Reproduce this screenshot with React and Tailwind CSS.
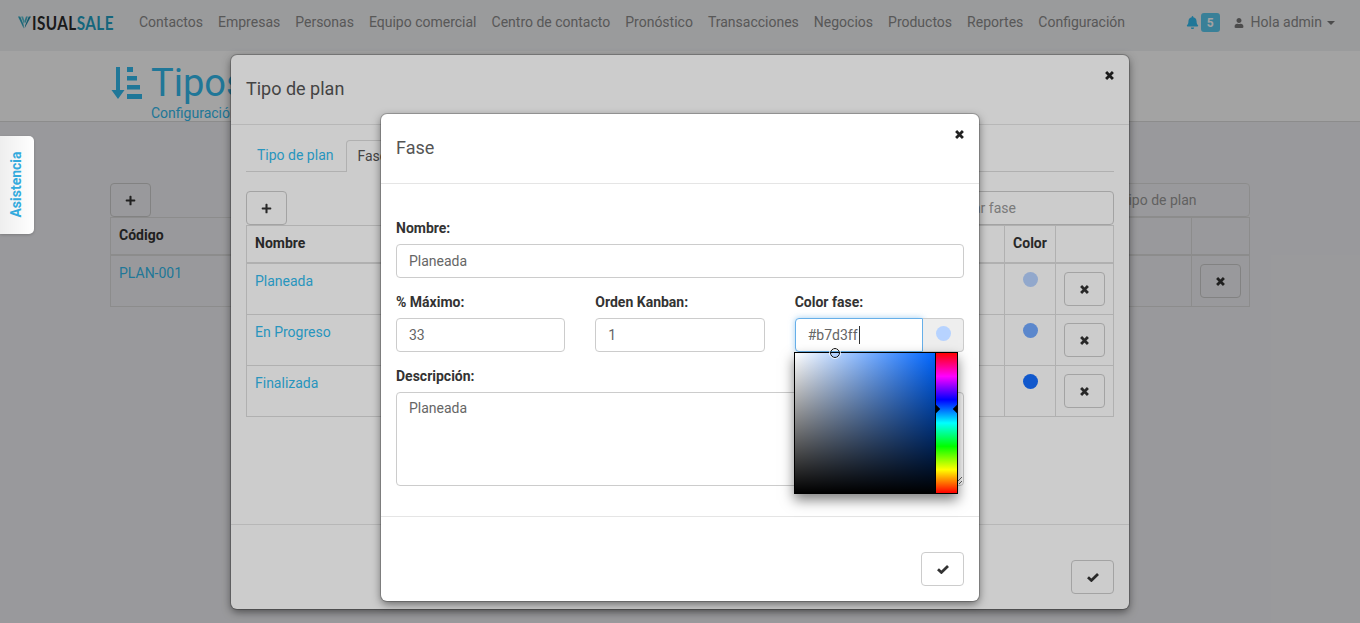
import React from "react";
import { FaPlus, FaBell, FaUser } from "react-icons/fa";

const link = "text-[#33bbee]";
const navItems = ["Contactos","Empresas","Personas","Equipo comercial","Centro de contacto","Pronóstico","Transacciones","Negocios","Productos","Reportes","Configuración"];

function XIcon({ className = "" }) {
  return (
    <svg width="9" height="9" viewBox="0 0 10 10" className={className} fill="none" stroke="currentColor" strokeWidth="3.1">
      <path d="M1.2 1.2 8.8 8.8M8.8 1.2 1.2 8.8" />
    </svg>
  );
}

function CheckIcon() {
  return (
    <svg width="12" height="9" viewBox="0 0 12 9" fill="none" stroke="currentColor" strokeWidth="2.8">
      <path d="M1 4.2 4.4 7.4 11 1" />
    </svg>
  );
}

function IconBtn({ children, className = "" }) {
  return (
    <button className={"flex h-[34px] w-[41px] items-center justify-center rounded-[4px] border border-[#ccc] text-[#333] " + className}>
      {children}
    </button>
  );
}

function Field({ label, children }) {
  return (
    <div>
      <label className="mb-[6px] block h-5 text-[14px] leading-5 font-bold text-[#333]">{label}</label>
      {children}
    </div>
  );
}

function TextBox({ children }) {
  return (
    <div className="flex h-[34px] items-center rounded-[4px] border border-[#ccc] bg-white px-3 text-[14px] text-[#666]">{children}</div>
  );
}

function Logo() {
  return (
    <div className="flex w-[98px] shrink-0 items-center text-[18px] leading-none font-bold tracking-[0.5px] font-['Lato',sans-serif]">
      <svg width="13" height="13" viewBox="0 0 15 14" className="mr-[1px] shrink-0">
        <path d="M0 0h2.6l4 10V14z" fill="#2fa6bf" />
        <path d="M3.6 0h2.2l2 6-1 3z" fill="#5cc2d4" />
        <path d="M15 0h-2.6l-4 10 -.9 4z" fill="#1e8aa8" />
        <path d="M11.4 0H9.2L7.6 5l1 3z" fill="#49b3c9" />
      </svg>
      <span className="origin-left scale-x-[0.85] whitespace-nowrap">
        <span className="text-[#2a2a2a]">ISUAL</span>
        <span className="text-[#22a0c4]">SALE</span>
      </span>
    </div>
  );
}

function ColorPicker() {
  return (
    <div className="absolute top-[238px] left-[413px] z-10 flex h-[142px] w-[164px] border border-black bg-black shadow-[0_6px_12px_rgba(0,0,0,0.5)]">
      <div className="relative h-full w-[140px] bg-[linear-gradient(to_bottom,transparent,#000),linear-gradient(to_right,#fff,#0066ff)]">
        <span className="absolute top-[-5px] left-[35px] h-[10px] w-[10px] rounded-full border-[1.5px] border-black outline outline-1 outline-white/80" />
      </div>
      <div className="relative ml-px h-full w-[21px] overflow-hidden bg-[linear-gradient(to_bottom,#f00,#f0f,#00f,#0ff,#0f0,#ff0,#f00)]">
        <span className="absolute top-[53px] left-[-3px] h-[6px] w-[6px] rotate-45 bg-black" />
        <span className="absolute top-[53px] right-[-3px] h-[6px] w-[6px] rotate-45 bg-black" />
      </div>
    </div>
  );
}

function PhaseRow({ name, dot }) {
  return (
    <div className="flex h-[51px] border-b border-[#ddd]">
      <div className="flex-1 border-r border-[#ddd] px-2 pt-[7px] text-[14px]">
        <span className={link}>{name}</span>
      </div>
      <div className="flex w-[51px] justify-center border-r border-[#ddd] pt-[7px]">
        <span className={"mt-px h-[15px] w-[15px] rounded-full " + dot} />
      </div>
      <div className="flex w-[57px] justify-center pt-2">
        <IconBtn><XIcon /></IconBtn>
      </div>
    </div>
  );
}

export default function App() {
  return (
    <div className="relative h-[623px] w-[1360px] overflow-hidden bg-[#f1f1f4] font-['Roboto',sans-serif] text-[14px] text-[#333]">
      {/* Page */}
      <nav className="flex h-[51px] items-center bg-[#f2f3f5] pr-[25px] pb-[6px] pl-[18px]">
        <Logo />
        <div className="ml-[23px] flex gap-[15px] text-[#777]">
          {navItems.map((n) => <span key={n} className="text-[14px] text-[#8a8a8a]">{n}</span>)}
        </div>
        <div className="ml-auto flex items-center">
          <FaBell className={"h-[13px] w-[13px] " + link} />
          <span className="ml-[2px] flex h-[19px] w-[19px] items-center justify-center rounded-[3px] bg-[#5bc9ee] text-[12px] font-bold text-white">5</span>
          <FaUser className="ml-[14px] h-[10px] w-[10px] text-[#777]" />
          <span className="ml-[7px] text-[#8a8a8a]">Hola admin</span>
          <span className="ml-[5px] h-0 w-0 border-x-[4px] border-t-[4px] border-x-transparent border-t-[#777]" />
        </div>
      </nav>

      <header className="h-[71px] border-b border-[#ddd] bg-white pt-[10px] pl-[110px]">
        <div className="flex items-start">
          <svg width="32" height="33" viewBox="0 0 32 33" className="mt-[6px] mr-[9px]" fill="#33bbee">
            <path d="M6 0h4v23h4.5L8 32 1.5 23H6z" />
            <rect x="17" y="0" width="6" height="5" />
            <rect x="17" y="9" width="10" height="4.5" />
            <rect x="17" y="18" width="13" height="4.5" />
            <rect x="17" y="27" width="15" height="5" />
          </svg>
          <div>
            <div className={"text-[38px] leading-[44px] " + link}>Tipos de plan</div>
            <div className={"text-[14px] leading-[16px] " + link}>Configuración</div>
          </div>
        </div>
      </header>

      <main className="ml-[110px] w-[1140px] pt-[61px]">
        <div className="flex justify-between">
          <IconBtn><FaPlus className="h-[11px] w-[11px]" /></IconBtn>
          <div className="flex h-[34px] w-[186px] items-center rounded-[4px] border border-[#ddd] px-3 text-[#999]">Buscar tipo de plan</div>
        </div>
        <div className="border-x border-t border-[#ddd]">
          <div className="flex h-[38px] border-b-2 border-[#ddd] font-bold">
            <div className="flex-1 border-r border-[#ddd] px-2 pt-[7px]">Código</div>
            <div className="w-[57px]" />
          </div>
          <div className="flex h-[51px] border-b border-[#ddd]">
            <div className={"flex-1 border-r border-[#ddd] px-2 pt-[7px] " + link}>PLAN-001</div>
            <div className="flex w-[57px] justify-end pt-2 pr-2">
              <IconBtn><XIcon /></IconBtn>
            </div>
          </div>
        </div>
      </main>

      {/* Backdrop 1 */}
      <div className="absolute inset-0 bg-black/20" />

      {/* Outer modal */}
      <div className="absolute top-[55px] left-[231px] flex h-[554px] w-[898px] flex-col rounded-[6px] bg-white shadow-[0_0_0_1px_rgba(0,0,0,0.2),0_3px_9px_rgba(0,0,0,0.5)]">
        <div className="relative flex h-[70px] shrink-0 items-center border-b border-[#e5e5e5] px-[15px] pb-[2px] text-[18px] text-[#555]">
          Tipo de plan
          <XIcon className="absolute top-[16px] right-[15px] text-[#222]" />
        </div>
        <div className="flex-1 px-[15px] pt-[15px]">
          <div className="flex h-[32px] border-b border-[#ddd]">
            <div className={"flex h-[31px] items-center pr-[13px] pl-[11px] " + link}>Tipo de plan</div>
            <div className="flex h-[32px] items-center rounded-t-[4px] border-x border-t border-[#ddd] bg-white px-[10px] text-[#555]">Fases</div>
          </div>
          <div className="mt-[19px] flex justify-between">
            <IconBtn><FaPlus className="h-[11px] w-[11px]" /></IconBtn>
            <div className="flex h-[34px] w-[185px] items-center rounded-[4px] border border-[#ccc] px-3 text-[#999]">Buscar fase</div>
          </div>
          <div className="border-x border-t border-[#ddd]">
            <div className="flex h-[38px] border-b-2 border-[#ddd] font-bold">
              <div className="flex-1 border-r border-[#ddd] px-2 pt-[7px]">Nombre</div>
              <div className="w-[51px] border-r border-[#ddd] pt-[7px] text-center">Color</div>
              <div className="w-[57px]" />
            </div>
            <PhaseRow name="Planeada" dot="bg-[#b7d3ff]" />
            <PhaseRow name="En Progreso" dot="bg-[#72a9ff]" />
            <PhaseRow name="Finalizada" dot="bg-[#166fff]" />
          </div>
        </div>
        <div className="flex h-[85px] shrink-0 items-start justify-end border-t border-[#e5e5e5] px-[15px] pt-[35px]">
          <button className="flex h-[34px] w-[43px] items-center justify-center rounded-[4px] border border-[#ccc] text-[#333]"><CheckIcon /></button>
        </div>
      </div>

      {/* Backdrop 2 */}
      <div className="absolute inset-0 bg-black/20" />

      {/* Help tab */}
      <div className="absolute top-[136px] left-0 flex h-[98px] w-[34px] items-center justify-center rounded-r-[5px] bg-[linear-gradient(to_right,#eeeeee,#fff)] pr-[2px] pb-[2px] shadow-[0_1px_3px_rgba(0,0,0,0.2)]">
        <span className="-rotate-90 text-[14px] font-bold text-[#33aadd]">Asistencia</span>
      </div>

      {/* Inner modal */}
      <div className="absolute top-[114px] left-[381px] flex h-[487px] w-[598px] flex-col rounded-[6px] bg-white shadow-[0_0_0_1px_rgba(0,0,0,0.2),0_3px_9px_rgba(0,0,0,0.5)]">
        <div className="relative flex h-[70px] shrink-0 items-center border-b border-[#e5e5e5] px-[15px] pb-[2px] text-[18px] text-[#555]">
          Fase
          <XIcon className="absolute top-[16px] right-[15px] text-[#222]" />
        </div>
        <div className="flex-1 px-[15px] pt-[34px]">
          <Field label="Nombre:"><TextBox>Planeada</TextBox></Field>
          <div className="mt-[14px] grid grid-cols-3 gap-[30px]">
            <Field label="% Máximo:"><TextBox>33</TextBox></Field>
            <Field label="Orden Kanban:"><TextBox>1</TextBox></Field>
            <Field label="Color fase:">
              <div className="flex h-[34px]">
                <div className="flex w-[128px] items-center rounded-l-[4px] border border-[#66afe9] bg-white px-3 text-[#666] shadow-[0_0_6px_rgba(102,175,233,0.6)]">
                  #b7d3ff<span className="ml-px h-[18px] w-px bg-[#333]" />
                </div>
                <div className="flex flex-1 items-center justify-center rounded-r-[4px] border border-l-0 border-[#ccc] bg-[#eee] pb-[4px] pl-[2px]">
                  <span className="h-[15px] w-[15px] rounded-full bg-[#b7d3ff]" />
                </div>
              </div>
            </Field>
          </div>
          <div className="mt-[14px]">
            <Field label="Descripción:">
              <textarea readOnly value="Planeada" className="block h-[94px] w-full rounded-[4px] border border-[#ccc] px-3 py-[5px] text-[14px] text-[#666] outline-none" />
            </Field>
          </div>
        </div>
        <div className="flex h-[85px] shrink-0 items-start justify-end border-t border-[#e5e5e5] px-[15px] pt-[35px]">
          <button className="flex h-[34px] w-[43px] items-center justify-center rounded-[4px] border border-[#ccc] text-[#333]"><CheckIcon /></button>
        </div>
        <ColorPicker />
      </div>
    </div>
  );
}
